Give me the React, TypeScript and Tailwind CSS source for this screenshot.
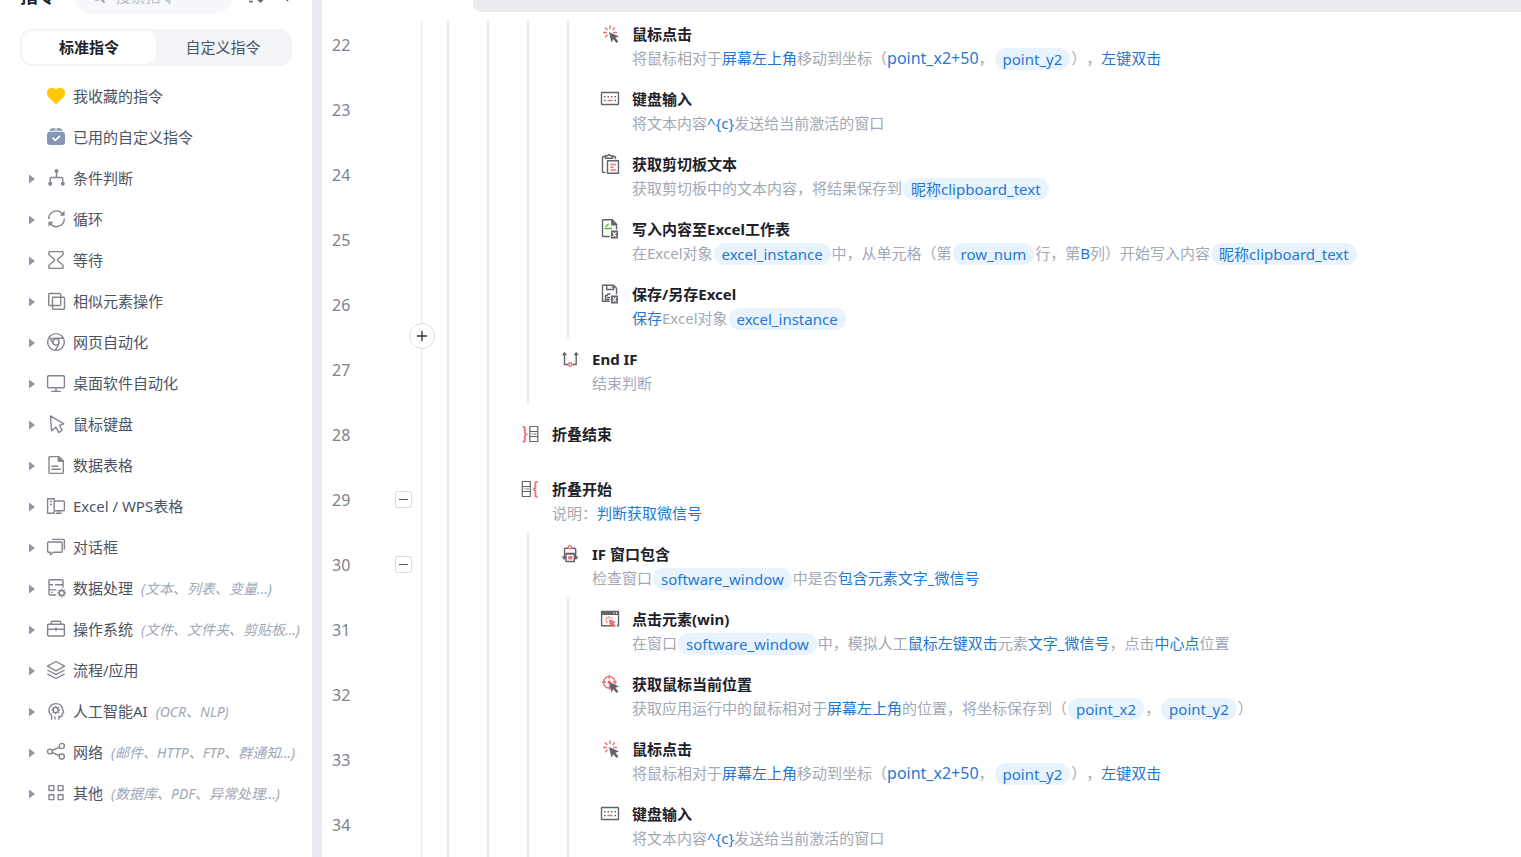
import { useState, type ReactNode } from "react"
import clsx from "clsx"

const INK = "#62636b"
const RED = "#ef7272"
const GREEN = "#5cb531"

interface IconProps {
  children: ReactNode
  color?: string
  className?: string
}

function Icon({ children, color = "#84858e", className }: IconProps) {
  return (
    <svg
      viewBox="0 0 20 20"
      fill="none"
      stroke={color}
      strokeWidth={1.4}
      strokeLinejoin="round"
      aria-hidden="true"
      className={clsx("size-5 shrink-0", className)}
    >
      {children}
    </svg>
  )
}

/* ---------- sidebar icons ---------- */

const heartIcon = (
  <Icon>
    <path
      d="M10 18c-.4 0-.8-.2-1.100-.5L2.600 11.200C.2 8.700.4 5 2.700 3.100 4.900 1.300 8.200 1.400 10 3.600c1.800-2.200 5.100-2.300 7.300-.5 2.300 1.900 2.500 5.600.1 8.100l-6.300 6.300c-.3.3-.7.5-1.100.5z"
      fill="#ffc800"
      stroke="none"
    />
  </Icon>
)

const boxIcon = (
  <Icon>
    <g fill="#8497b8" stroke="none">
      <path d="M5.500 1.200h4v2.600H2.800z" />
      <path d="M10.500 1.200h4l2.700 2.600h-6.700z" />
      <rect x="1" y="4.700" width="18" height="13.300" rx="3" />
    </g>
    <path d="M6.500 10.600l2.800 2.700 4.700-4.300" stroke="#fff" strokeWidth={1.700} />
  </Icon>
)

const branchIcon = (
  <Icon>
    <path d="M10.500 3v6.500M4.200 15V10.500q0-1 1-1h10.600q1 0 1 1V15" />
    <g fill="#84858e" stroke="none">
      <circle cx="10.500" cy="2.900" r="2" />
      <circle cx="4.200" cy="15.700" r="2" />
      <circle cx="16.800" cy="15.700" r="2" />
    </g>
  </Icon>
)

const loopIcon = (
  <Icon>
    <path d="M2.800 10A7.700 7.700 0 0 1 16.800 5.300M18.200 9.500A7.700 7.700 0 0 1 4.200 14.300" />
    <path d="M18.600 1.800v5H13.600zM2.400 17.800V12.800H7.400z" fill="#84858e" stroke="none" />
  </Icon>
)

const hourglassIcon = (
  <Icon>
    <path d="M3 1.600h14v3.200L12 9q-1.200 1 0 2l5 4.200v3.200H3v-3.200L8 11q1.200-1 0-2L3 4.800z" />
  </Icon>
)

const similarIcon = (
  <Icon>
    <rect x="2.700" y="2.500" width="12" height="12" rx="1" />
    <rect x="6.500" y="6.200" width="12" height="12" rx="1" />
  </Icon>
)

const chromeIcon = (
  <Icon>
    <circle cx="10" cy="10" r="8.400" />
    <circle cx="10" cy="10" r="3.100" />
    <path d="M3.300 5.100l3.900 6.300M5 7.200Q6.500 6 10 6.200h7.400M12.800 11.400Q12 14.600 9.300 18.300" />
  </Icon>
)

const desktopIcon = (
  <Icon>
    <rect x="1.600" y="2.800" width="16.800" height="12" rx="1" />
    <path d="M10 15v3M5.200 18.400h9.600" />
  </Icon>
)

const pointerIcon = (
  <Icon>
    <path d="M4.400 1.900L17.800 9.800l-4.300 1.500 2.600 5-3.200 2.300-3-5.200-4.300 3.400z" />
  </Icon>
)

const sheetIcon = (
  <Icon>
    <path d="M12.500 1.600H4q-1 0-1 1v14.800q0 1 1 1h12.300q1 0 1-1V6z" />
    <path d="M12.300 1.600v4.600h5z" fill="#84858e" />
    <path d="M5.300 11.300h6.900M5.300 14.300h9.700" />
  </Icon>
)

const excelIcon = (
  <Icon>
    <path d="M8.200 17.300H1.600V2.800h6.600z" />
    <path d="M8.200 5h9.200q1 0 1 1v7.800q0 1-1 1H8.200M12.800 15v2M10 17.300h5.600" />
    <path d="M4 5.500h2M4 8.400h2" strokeWidth={1.500} />
  </Icon>
)

const dialogIcon = (
  <Icon>
    <path d="M2.600 5h12.600q1 0 1 1v8.200q0 1-1 1H7.400l-3 2.500v-2.500H2.600q-1 0-1-1V6q0-1 1-1z" />
    <path d="M5.800 2.400h11.600q1 0 1 1v9" />
  </Icon>
)

const gearSpokes = "M15.700 10.800v1.700M15.700 17.500v1.700M11.500 15h1.700M18.200 15h1.700M12.800 12.100l1.100 1.100M17.500 16.800l1.100 1.100M12.800 17.900l1.100-1.100M17.500 13.200l1.100-1.100"

const dataIcon = (
  <Icon>
    <path d="M10.300 17H4q-1 0-1-1V2.700q0-1 1-1h12q1 0 1 1V9.400M3 11.900h7.500" />
    <path d="M3 6.700h4M9 6.700h8M5 14.400h1.500" />
    <circle cx="15.700" cy="15" r="2.500" />
    <path d={gearSpokes} />
  </Icon>
)

const systemIcon = (
  <Icon>
    <rect x="1.600" y="5.300" width="16.800" height="11.700" rx="1" />
    <path d="M5.300 5V3.300q0-1 1-1h7.400q1 0 1 1V5M1.600 10.200h6.900M11.500 10.200h6.900" />
    <path d="M10 8.400v3.400M8.500 10.200h3" strokeWidth={1.700} />
  </Icon>
)

const layersIcon = (
  <Icon>
    <path d="M10 1.500l8.600 4.700L10 10.900 1.400 6.200zM1.400 10L10 14.700 18.600 10M1.400 13.800L10 18.500l8.600-4.700" />
  </Icon>
)

const brainIcon = (
  <Icon>
    <path d="M5.600 18.800v-4.600C3.800 13 2.900 11.300 2.900 9.300 2.900 5.500 6 2.600 9.900 2.600c4 0 6.500 2.600 6.800 6.200l1 2.700-1.500.8v2.200q0 1-1 1h-2.300v3.300" />
    <circle cx="9.700" cy="9" r="2.600" />
    <path d="M9.700 4.700v1.700M9.700 11.600v1.700M5.400 9h1.700M12.300 9h1.700M6.700 6l1.200 1.200M11.500 10.800l1.200 1.200M6.700 12l1.200-1.200M11.500 7.200l1.200-1.200M9 15.500v3" />
  </Icon>
)

const shareIcon = (
  <Icon>
    <circle cx="3.900" cy="9.500" r="2.400" />
    <circle cx="15.800" cy="4" r="2.600" />
    <circle cx="15.800" cy="14.600" r="2.600" />
    <path d="M6.200 8.500l7.100-3.400M6.200 10.500l7.100 3.100" />
  </Icon>
)

const otherIcon = (
  <Icon>
    <rect x="3" y="2.600" width="4.900" height="4.900" />
    <rect x="12.100" y="2.600" width="4.900" height="4.900" />
    <rect x="3" y="11.700" width="4.900" height="4.900" />
    <rect x="12.100" y="11.700" width="4.900" height="4.900" />
  </Icon>
)

/* ---------- flow icons ---------- */

const cursorPath = "M9 7.900l10 4.500-3.600 1.400 3 3.600-1.900 1.700-3.100-3.800-2 3.100z"

const clickIcon = (
  <Icon color={INK}>
    <path
      d="M10 1.300v3.900M3 8.500h4M13 8.500h4M5 3.500l2.500 2.500M15 3.500l-2.500 2.500M7.500 10.800L5 13.300"
      stroke={RED}
    />
    <path d={cursorPath} fill={INK} stroke="none" />
  </Icon>
)

const keyboardIcon = (
  <Icon color={INK}>
    <rect x="1.500" y="3.500" width="17" height="12" rx="0.500" />
    <path d="M4 7.700h1.500M7.500 7.700H9M11 7.700h1.500M14.500 7.700H16M4 11.500h1.500M14.500 11.500H16" strokeWidth={1.500} />
    <path d="M7.500 11.500h5" stroke={RED} strokeWidth={1.500} />
  </Icon>
)

const clipboardIcon = (
  <Icon color={INK}>
    <path d="M5.500 18.400H3.500q-1 0-1-1V3.500q0-1 1-1H5M13 2.500h1.500q1 0 1 1v1.700" />
    <path d="M5.500 1.800h2l1.500-1.300 1.500 1.300h2v2.400h-7z" strokeWidth={1.500} />
    <rect x="7.500" y="6.700" width="11" height="12.600" rx="0.500" />
    <path d="M10.300 10.500h5.500M10.300 13.300h3.200M10.300 16h5.500" stroke={RED} />
  </Icon>
)

const excelBadge = (
  <>
    <rect x="11" y="11.500" width="7" height="8" fill={INK} stroke="none" />
    <path d="M12.700 13.200l3.600 4.600M16.300 13.200l-3.600 4.600" stroke="#fff" strokeWidth={1.100} />
  </>
)

const excelWriteIcon = (
  <Icon color={INK}>
    <path d="M9.800 17.500H3.300q-.8 0-.8-.8V1.500q0-.8.800-.8h8.700l4.500 4.700v5" />
    <path d="M11.800.7v5h4.900z" fill={INK} />
    <path d="M4.500 9.500H12M5.300 7.700l3.500-3" stroke={GREEN} />
    {excelBadge}
  </Icon>
)

const excelSaveIcon = (
  <Icon color={INK}>
    <path d="M9.800 17.300H2.500v-16h11l3 3v6M6.700 1.500v4h7v-4" />
    <path d="M5.500 16.500V11.500h1.500l1-1.500h2.500M7 13.500h3M5.500 15.500h4" strokeWidth={1.500} />
    <path d="M11.500 3.200h1.300" stroke={GREEN} strokeWidth={1.800} />
    {excelBadge}
  </Icon>
)

const endIfIcon = (
  <Icon color={INK}>
    <path d="M4.500 4.500V15.500H8M12.500 15.500h3.700v-11" />
    <path d="M1.900 6.200L4.500 2.700 7.100 6.200zM13.600 6.200l2.600-3.500 2.600 3.500z" fill={INK} stroke="none" />
    <circle cx="10.300" cy="15.500" r="1.700" stroke={RED} />
  </Icon>
)

const foldEndIcon = (
  <Icon color={INK}>
    <path d="M2.600 2.900h1.200q1 0 1 1v4.400q0 1.500 1.900 2-1.900.5-1.900 2v4.400q0 1-1 1H2.600" stroke={RED} strokeWidth={1.900} />
    <path d="M9.800 2.500h8v15h-8zM9.800 7.500h8M9.800 12.500h8M11.700 10h1.300M14 10h2.300" strokeWidth={1.200} />
  </Icon>
)

const foldStartIcon = (
  <Icon color={INK}>
    <path d="M2.300 2.500h8v15h-8zM2.300 7.500h8M2.300 12.500h8M4.200 10h1.300M6.500 10h2.300" strokeWidth={1.200} />
    <path d="M17.600 2.900h-1.200q-1 0-1 1v4.400q0 1.500-1.900 2 1.900.5 1.900 2v4.400q0 1 1 1h1.200" stroke={RED} strokeWidth={1.900} />
  </Icon>
)

const ifWindowIcon = (
  <Icon color={INK}>
    <path d="M8 4.300H5.500q-1 0-1 1V13M12 4.300h2.700q1 0 1 1V13" />
    <path d="M1.500 12.500h5L4.400 16zM13.500 12.500h5L15.900 16z" fill={INK} stroke="none" />
    <path d="M6 9.500h8.300v8H6z" fill="#fff" />
    <path d="M6 9.800h8.300" strokeWidth={1.700} />
    <circle cx="10" cy="3.200" r="1.600" stroke={RED} />
    <rect x="8.200" y="12" width="4" height="3.500" fill={RED} stroke="none" />
  </Icon>
)

const elementIcon = (
  <Icon color={INK}>
    <path d="M14 16.800H1.600V2.500h16.900v14.300H17" />
    <rect x="1.600" y="2.300" width="16.900" height="3.700" fill={INK} stroke="none" />
    <path d="M13.500 4h1M16 4h1" stroke="#fff" />
    <path d="M9 7v2.300M4.800 11h2.400M11.500 11h1.700M6 8.100l1.600 1.600M12 8.100l-1.500 1.500M7.500 12.300L6 13.800" stroke={RED} strokeWidth={1.100} />
    <path d="M8.600 10.200l7.400 2.900-2.500 1.200 2.400 2.500-1.700 1.500-2.300-2.600-1.500 2z" fill={RED} stroke="none" />
  </Icon>
)

const locateIcon = (
  <Icon color={INK}>
    <circle cx="9.300" cy="8.300" r="5.800" stroke={RED} />
    <path d="M9.300 1v4M2 8.300h4M12.600 8.300h4M9.300 11.600v4" stroke={RED} />
    <circle cx="9.300" cy="8.300" r="1.700" fill={RED} stroke="none" />
    <path d={cursorPath} fill={INK} stroke="none" />
  </Icon>
)

/* ---------- data ---------- */

interface Category {
  name: string
  icon: ReactNode
  hint?: string
  leaf?: boolean
}

const categories: Category[] = [
  { name: "我收藏的指令", icon: heartIcon, leaf: true },
  { name: "已用的自定义指令", icon: boxIcon, leaf: true },
  { name: "条件判断", icon: branchIcon },
  { name: "循环", icon: loopIcon },
  { name: "等待", icon: hourglassIcon },
  { name: "相似元素操作", icon: similarIcon },
  { name: "网页自动化", icon: chromeIcon },
  { name: "桌面软件自动化", icon: desktopIcon },
  { name: "鼠标键盘", icon: pointerIcon },
  { name: "数据表格", icon: sheetIcon },
  { name: "Excel / WPS表格", icon: excelIcon },
  { name: "对话框", icon: dialogIcon },
  { name: "数据处理", icon: dataIcon, hint: "(文本、列表、变量...)" },
  { name: "操作系统", icon: systemIcon, hint: "(文件、文件夹、剪贴板...)" },
  { name: "流程/应用", icon: layersIcon },
  { name: "人工智能AI", icon: brainIcon, hint: "(OCR、NLP)" },
  { name: "网络", icon: shareIcon, hint: "(邮件、HTTP、FTP、群通知...)" },
  { name: "其他", icon: otherIcon, hint: "(数据库、PDF、异常处理...)" },
]

// plain string = muted text, v = value, e = expression, c = variable chip
type Token = string | { v: string } | { e: string } | { c: string }

interface Step {
  line: number
  depth: number
  icon: ReactNode
  title: string
  detail?: Token[]
  foldable?: boolean
}

const clickDetail: Token[] = [
  "将鼠标相对于",
  { v: "屏幕左上角" },
  "移动到坐标（",
  { e: "point_x2+50" },
  "，",
  { c: "point_y2" },
  "），",
  { v: "左键双击" },
]

const typeDetail: Token[] = ["将文本内容", { v: "^{c}" }, "发送给当前激活的窗口"]

const steps: Step[] = [
  { line: 22, depth: 4, icon: clickIcon, title: "鼠标点击", detail: clickDetail },
  { line: 23, depth: 4, icon: keyboardIcon, title: "键盘输入", detail: typeDetail },
  {
    line: 24,
    depth: 4,
    icon: clipboardIcon,
    title: "获取剪切板文本",
    detail: ["获取剪切板中的文本内容，将结果保存到", { c: "昵称clipboard_text" }],
  },
  {
    line: 25,
    depth: 4,
    icon: excelWriteIcon,
    title: "写入内容至Excel工作表",
    detail: [
      "在Excel对象",
      { c: "excel_instance" },
      "中，从单元格（第",
      { c: "row_num" },
      "行，第",
      { v: "B" },
      "列）开始写入内容",
      { c: "昵称clipboard_text" },
    ],
  },
  {
    line: 26,
    depth: 4,
    icon: excelSaveIcon,
    title: "保存/另存Excel",
    detail: [{ v: "保存" }, "Excel对象", { c: "excel_instance" }],
  },
  { line: 27, depth: 3, icon: endIfIcon, title: "End IF", detail: ["结束判断"] },
  { line: 28, depth: 2, icon: foldEndIcon, title: "折叠结束" },
  {
    line: 29,
    depth: 2,
    icon: foldStartIcon,
    title: "折叠开始",
    detail: ["说明：", { v: "判断获取微信号" }],
    foldable: true,
  },
  {
    line: 30,
    depth: 3,
    icon: ifWindowIcon,
    title: "IF 窗口包含",
    detail: ["检查窗口", { c: "software_window" }, "中是否", { v: "包含元素文字_微信号" }],
    foldable: true,
  },
  {
    line: 31,
    depth: 4,
    icon: elementIcon,
    title: "点击元素(win)",
    detail: [
      "在窗口",
      { c: "software_window" },
      "中，模拟人工",
      { v: "鼠标左键双击" },
      "元素",
      { v: "文字_微信号" },
      "，点击",
      { v: "中心点" },
      "位置",
    ],
  },
  {
    line: 32,
    depth: 4,
    icon: locateIcon,
    title: "获取鼠标当前位置",
    detail: [
      "获取应用运行中的鼠标相对于",
      { v: "屏幕左上角" },
      "的位置，将坐标保存到（",
      { c: "point_x2" },
      "，",
      { c: "point_y2" },
      "）",
    ],
  },
  { line: 33, depth: 4, icon: clickIcon, title: "鼠标点击", detail: clickDetail },
  { line: 34, depth: 4, icon: keyboardIcon, title: "键盘输入", detail: typeDetail },
]

/* ---------- sidebar ---------- */

function SidebarHeader() {
  return (
    <header className="flex h-[29px] shrink-0 items-end overflow-hidden pb-[15px] pl-5 pr-5">
      <div className="flex h-9 w-full items-center">
        <h1 className="w-14 text-lg font-bold text-[#1d2129]">指令</h1>
        <label className="flex h-9 w-[158px] items-center gap-2.5 rounded-full bg-[#f7f8fb] pl-4">
          <svg viewBox="0 0 14 14" fill="none" stroke="#7c818d" strokeWidth={1.400} className="size-[14px] shrink-0">
            <circle cx="6" cy="6" r="4.800" />
            <path d="M9.500 9.500l4 4" />
          </svg>
          <input
            type="text"
            aria-label="搜索指令"
            placeholder="搜索指令"
            className="w-24 bg-transparent text-[15px] outline-none placeholder:text-[#b4bac6]"
          />
        </label>
        <button type="button" aria-label="排序" className="ml-4">
          <svg viewBox="0 0 16 16" fill="none" stroke="#5f6470" strokeWidth={1.500} className="size-4">
            <path d="M1 3h9M1 8h6M1 13.500h4M12.500 3v10M9.500 11l3 3 3-3" />
          </svg>
        </button>
        <button type="button" aria-label="收起" className="ml-4">
          <svg viewBox="0 0 12 12" fill="none" stroke="#5f6470" strokeWidth={1.500} className="size-3">
            <path d="M8 1L3 6l5 5" />
          </svg>
        </button>
      </div>
    </header>
  )
}

function Sidebar() {
  const [tab, setTab] = useState(0)

  return (
    <aside className="flex w-[312px] shrink-0 flex-col overflow-hidden">
      <SidebarHeader />
      <div role="tablist" className="mx-5 mb-2.5 flex h-[37px] shrink-0 rounded-xl bg-[#f3f4f8] p-0.5">
        {["标准指令", "自定义指令"].map((label, i) => (
          <button
            key={label}
            type="button"
            role="tab"
            aria-selected={tab === i}
            onClick={() => setTab(i)}
            className={clsx(
              "flex-1 rounded-[10px] pb-0.5 text-[15px] leading-5",
              tab === i ? "bg-white font-bold text-[#1d2129]" : "text-[#4c5464]",
            )}
          >
            {label}
          </button>
        ))}
      </div>
      <nav className="flex flex-col">
        {categories.map((cat) => (
          <button
            key={cat.name}
            type="button"
            className="flex items-start whitespace-nowrap py-2.5 pl-[29px] text-left text-[15px] leading-[21px] text-[#4c5464]"
          >
            <svg viewBox="0 0 6 10" aria-hidden="true" className="mt-[6px] mr-[11px] h-2.5 w-1.5 shrink-0">
              {!cat.leaf && <path d="M0 .5L6 5 0 9.500z" fill="#8c98ad" />}
            </svg>
            {cat.icon}
            <span className="ml-[7px]">{cat.name}</span>
            {cat.hint && <span className="ml-2 text-sm leading-[21px] italic text-[#a0a7b6]">{cat.hint}</span>}
          </button>
        ))}
      </nav>
    </aside>
  )
}

/* ---------- flow editor ---------- */

function DetailToken({ token }: { token: Token }) {
  if (typeof token === "string") return <span>{token}</span>
  if ("c" in token) {
    return <span className="mx-px mt-px h-[22px] rounded-full bg-[#e9f3fe] px-2 text-[#1f78d4]">{token.c}</span>
  }
  if ("e" in token) return <span className="text-base leading-[22px] text-[#1f78d4]">{token.e}</span>
  return <span className="text-[#1f78d4]">{token.v}</span>
}

function StepRow({ step }: { step: Step }) {
  const [folded, setFolded] = useState(false)
  const guides = Array.from({ length: step.depth }, (_, i) => i)

  return (
    <li className="flex h-[65px]">
      <div className="flex w-[100px] shrink-0 items-center justify-between border-r border-[#e9eaee] pb-0.5 pl-2.5 pr-[9px]">
        <span className="text-base text-[#7d828d]">{step.line}</span>
        {step.foldable && (
          <button
            type="button"
            aria-label={folded ? "展开" : "折叠"}
            onClick={() => setFolded(!folded)}
            className="flex size-[17px] items-center justify-center rounded-xs border border-[#dcdde1]"
          >
            <span className="h-px w-[9px] bg-[#55575e]" />
          </button>
        )}
      </div>
      {guides.map((i) => (
        <span key={i} className={clsx("shrink-0 border-r-2 border-[#e9eaec]", i === 0 ? "w-[27px]" : "w-10")} />
      ))}
      <div className={clsx("flex gap-3 whitespace-nowrap pl-[31px]", step.detail ? "pt-[11px]" : "items-center pb-[3px]")}>
        {step.icon}
        <div>
          <h2 className="text-[15px] leading-5 font-bold text-[#1d2129]">{step.title}</h2>
          {step.detail && (
            <p className="mt-[3px] flex items-start text-[15px] leading-[22px] text-[#a3a8b5]">
              {step.detail.map((token, i) => (
                <DetailToken key={i} token={token} />
              ))}
            </p>
          )}
        </div>
      </div>
    </li>
  )
}

export default function App() {
  return (
    <div className="flex h-screen overflow-hidden bg-white font-['Noto_Sans','Noto_Sans_CJK_SC',sans-serif] [text-spacing-trim:space-all]">
      <Sidebar />
      <div className="w-2.5 shrink-0 bg-[#ebecf1]" />
      <main className="flex min-w-0 flex-1 flex-col">
        <div className="mb-[9px] ml-[151px] h-3 shrink-0 rounded-bl-lg bg-[#ebecf0]" />
        <div className="min-h-0 flex-1 overflow-hidden">
          <ol className="relative -mt-2">
            {steps.map((step) => (
              <StepRow key={step.line} step={step} />
            ))}
            {/* insert point between 26 and 27 */}
            <button
              type="button"
              aria-label="插入指令"
              className="absolute top-[310px] left-[87px] flex size-[26px] items-center justify-center rounded-full border border-[#dcdde1] bg-white"
            >
              <svg viewBox="0 0 10 10" stroke="#33353c" strokeWidth={1.400} className="size-2.5">
                <path d="M5 0v10M0 5h10" />
              </svg>
            </button>
          </ol>
        </div>
      </main>
    </div>
  )
}
